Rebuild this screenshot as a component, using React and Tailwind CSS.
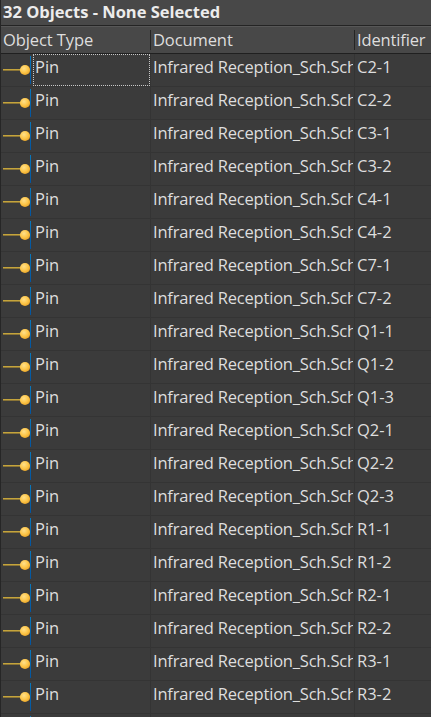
const identifiers = [
  'C2-1', 'C2-2', 'C3-1', 'C3-2', 'C4-1', 'C4-2', 'C7-1', 'C7-2', 'Q1-1', 'Q1-2',
  'Q1-3', 'Q2-1', 'Q2-2', 'Q2-3', 'R1-1', 'R1-2', 'R2-1', 'R2-2', 'R3-1', 'R3-2',
];

function PinIcon() {
  return (
    <svg width="29" height="32" viewBox="0 0 29 32" className="block shrink-0">
      <defs>
        <radialGradient id="pin" cx="0.4" cy="0.35" r="0.65">
          <stop offset="0" stopColor="#ffe08a" />
          <stop offset="0.6" stopColor="#fdc64a" />
          <stop offset="1" stopColor="#eca92c" />
        </radialGradient>
      </defs>
      <rect x="2" y="15" width="18" height="1" fill="#c4a43c" />
      <rect x="2" y="16" width="18" height="1" fill="#8a7436" />
      <circle cx="24" cy="16" r="5.1" fill="url(#pin)" />
    </svg>
  );
}

function Row({ id, focused }) {
  return (
    <div className="flex h-[33px] shrink-0 border-b border-[#343434]">
      <PinIcon />
      <div className="mt-[2px] h-7 w-px shrink-0 bg-linear-to-b from-[#0878bd] to-[#0354a0]" />
      <div className="w-[2px] shrink-0" />
      <div className={`h-8 w-[117px] shrink-0 border border-dotted pl-px leading-[23px] ${focused ? 'border-[#c8c8c8]' : 'border-transparent'}`}>
        Pin
      </div>
      <div className="h-8 w-[204px] shrink-0 border-l border-[#343434] pl-[2px] pr-px leading-[25px]">
        <div className="overflow-hidden tracking-[-0.2px] whitespace-nowrap">Infrared Reception_Sch.Sch</div>
      </div>
      <div className="h-8 grow border-l border-[#343434] pl-[2px] leading-[25px]">{id}</div>
    </div>
  );
}

export default function App() {
  return (
    <div className="flex h-[717px] w-[431px] flex-col overflow-hidden border-l border-[#262626] bg-[#3b3b3b] font-['Open_Sans','Noto_Sans',sans-serif] text-[16.5px] text-[#dedede]">
      <div className="h-[26px] shrink-0 border-b border-[#242424] bg-[#484848] pl-[2px] text-[16.5px] leading-[23px] font-bold text-[#ececec]">
        32 Objects - None Selected
      </div>
      <div className="flex h-7 shrink-0 border-t border-b border-t-[#575757] border-b-[#202020] bg-[#484848] leading-[25px]">
        <div className="w-[149px] shrink-0 pl-[2px] tracking-[-0.1px]">Object Type</div>
        <div className="mt-[3px] h-5 w-[204px] shrink-0 border-l border-[#252525] pl-[2px] leading-[19px] tracking-[-0.1px]">Document</div>
        <div className="mt-[3px] h-5 grow border-l border-[#252525] pl-[2px] leading-[19px] tracking-[-0.15px]">Identifier</div>
      </div>
      {identifiers.map((id, i) => (
        <Row key={id} id={id} focused={i === 0} />
      ))}
      <div className="flex h-[3px] shrink-0">
        <div className="mt-[2px] ml-[29px] h-px w-px bg-[#0878bd]" />
        <div className="ml-[119px] w-[204px] shrink-0 border-l border-[#343434]" />
        <div className="grow border-l border-[#343434]" />
      </div>
    </div>
  );
}
